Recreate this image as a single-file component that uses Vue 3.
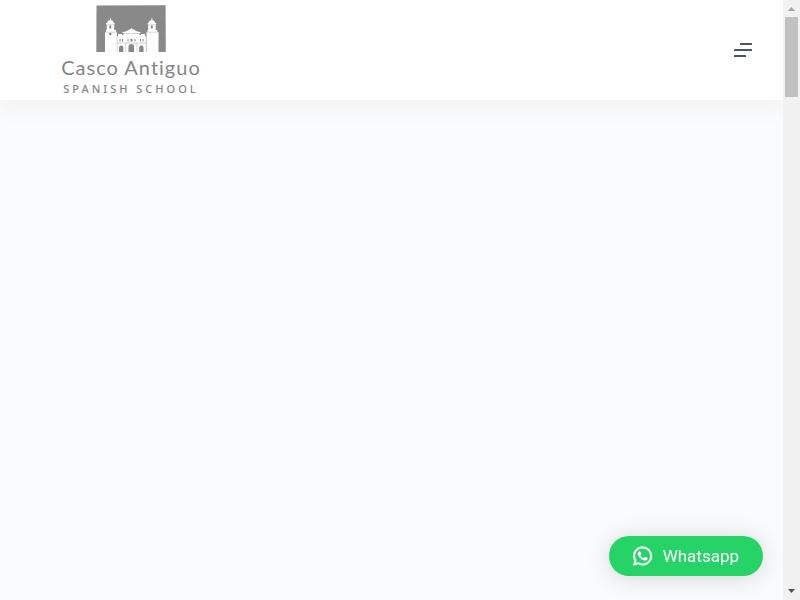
<template>
  <div class="page">
    <div class="content">
      <header class="header">
        <a href="#" class="logo" aria-label="Casco Antiguo Spanish School">
          <svg class="logo-mark" viewBox="0 0 70 47" aria-hidden="true">
            <path fill="#898989" d="M.5.6 69.6.2 69.8 47H.3z" />
            <!-- towers -->
            <g fill="#fff">
              <path d="M14 13h.8v2c1.800.4 2.800 1.600 3 3h.9v1.600h-.5V25H20v2h1v20H9V27h1v-2h.7v-5.400h-.6V18h.9c.3-1.400 1.200-2.600 3-3z" />
              <path d="M55.500 13h.8v2c1.800.4 2.800 1.600 3 3h.9v1.600h-.5V25h1.600v2h1.200v20H50.500V27h1v-2h.7v-5.400h-.6V18h.9c.3-1.400 1.200-2.600 3-3z" />
            </g>
            <!-- facade -->
            <path fill="#fff" d="M21 31h1v-2h4v1h1.500v-2h-1v-1c3-.2 5-1.200 6.500-2.500h1L35.500 23l1.500 1.500h1c1.500 1.300 3.500 2.300 6.500 2.500v1h-1v2H45v-1h4v2h1.500v16H21z" />
            <g fill="none" stroke="#aaa" stroke-width=".5">
              <path d="M9 27.200h12M50.500 27.200h12M10.500 19.800h8M51.800 19.800h8" />
              <path d="M26.500 28.500h18M21 38h29.500M21.200 31v16M29.700 38v9M41 38v9M50.300 31v16" />
            </g>
            <g fill="#898989">
              <path d="M13.300 23.500v-2.300a1 1 0 0 1 2 0v2.300zM54.800 23.500v-2.300a1 1 0 0 1 2 0v2.300z" />
              <circle cx="14.300" cy="29" r="1.300" />
              <path d="M23.500 34h1v2.500h-1zM26 34h1v2.500h-1zM34.500 34h2v2.500h-2zM31.500 34h1v2.500h-1zM38.500 34h1v2.500h-1zM44 34h1v2.500h-1zM46.500 34h1v2.500h-1z" />
              <path d="M23 47v-4.200a2.200 2.200 0 0 1 4.400 0V47zM32.500 47v-5.300a2.800 2.800 0 0 1 5.600 0V47zM43.200 47v-4.200a2.200 2.200 0 0 1 4.400 0V47z" />
            </g>
          </svg>
          <span class="logo-name">Casco Antiguo</span>
          <span class="logo-tagline">SPANISH SCHOOL</span>
        </a>

        <button type="button" class="menu-toggle" aria-label="Menu">
          <svg width="18" height="14" viewBox="0 0 18 14" aria-hidden="true">
            <rect x="6" y="0" width="12" height="2" rx=".5" />
            <rect x="0" y="6" width="18" height="2" rx=".5" />
            <rect x="0" y="12" width="12" height="2" rx=".5" />
          </svg>
        </button>
      </header>
      <main class="main"></main>
    </div>

    <div class="scrollbar" aria-hidden="true">
      <svg class="scroll-arrow" viewBox="0 0 17 17"><path fill="#a3a3a3" d="M5 11h7L8.500 7z" /></svg>
      <div class="scroll-track">
        <div class="scroll-thumb"></div>
      </div>
      <svg class="scroll-arrow" viewBox="0 0 17 17"><path fill="#505050" d="M5 6h7l-3.500 4z" /></svg>
    </div>

    <a href="#" class="whatsapp">
      <svg width="20" height="20" viewBox="-.2 -.5 17 17" aria-hidden="true">
        <path d="M13.601 2.326A7.850 7.850 0 0 0 7.994 0C3.627 0 .068 3.558.064 7.926c0 1.399.366 2.760 1.057 3.965L0 16l4.204-1.102a7.900 7.900 0 0 0 3.790.965h.004c4.368 0 7.926-3.558 7.930-7.930A7.900 7.900 0 0 0 13.600 2.326zM7.994 14.521a6.600 6.600 0 0 1-3.356-.920l-.240-.144-2.494.654.666-2.433-.156-.251a6.560 6.560 0 0 1-1.007-3.505c0-3.626 2.957-6.584 6.591-6.584a6.560 6.560 0 0 1 4.660 1.931 6.560 6.560 0 0 1 1.928 4.660c-.004 3.639-2.961 6.592-6.592 6.592m3.615-4.934c-.197-.099-1.170-.578-1.353-.646-.182-.065-.315-.099-.445.099-.133.197-.513.646-.627.775-.114.133-.232.148-.430.050-.197-.100-.836-.308-1.592-.985-.590-.525-.985-1.175-1.103-1.372-.114-.198-.011-.304.088-.403.087-.088.197-.232.296-.346.100-.114.133-.198.198-.330.065-.134.034-.248-.015-.347-.050-.099-.445-1.076-.612-1.470-.160-.389-.323-.335-.445-.340-.114-.007-.247-.007-.380-.007a.730.730 0 0 0-.529.247c-.182.198-.691.677-.691 1.654s.710 1.916.810 2.049c.098.133 1.394 2.132 3.383 2.992.470.205.840.326 1.129.418.475.152.904.129 1.246.080.380-.058 1.171-.480 1.338-.943.164-.464.164-.860.114-.943-.049-.084-.182-.133-.380-.232" />
      </svg>
      <span>Whatsapp</span>
    </a>
  </div>
</template>

<script setup>
</script>

<style>
body {
  margin: 0;
  background: #fafbfd;
}
</style>

<style scoped>
.page {
  display: flex;
  min-height: 100vh;
  background: #fafbfd;
  font-family: Roboto, sans-serif;
}

.content {
  display: flex;
  flex: 1;
  flex-direction: column;
  min-width: 0;
  overflow: hidden;
}

.header {
  display: flex;
  align-items: center;
  justify-content: space-between;
  box-sizing: border-box;
  min-height: 100px;
  padding: 5px 31px 5px 59px;
  background: #fff;
  box-shadow: 0 10px 20px rgba(41, 51, 61, 0.04);
}

.main {
  flex: 1;
}

.logo {
  display: flex;
  flex-direction: column;
  align-items: center;
  min-width: 144px;
  color: #858585;
  font-family: Lato, sans-serif;
  text-decoration: none;
  white-space: nowrap;
}

.logo-mark {
  width: 70px;
  height: 47px;
}

.logo-name {
  margin-top: 4px;
  font-size: 20px;
  line-height: 22px;
  letter-spacing: 1px;
}

.logo-tagline {
  margin-top: 5px;
  font-family: "Noto Sans", sans-serif;
  font-size: 11px;
  font-weight: 500;
  line-height: 12px;
  letter-spacing: 3px;
}

.menu-toggle {
  display: flex;
  padding: 0;
  border: none;
  background: none;
  cursor: pointer;
}

.menu-toggle svg {
  fill: #4b5663;
}

.scrollbar {
  display: flex;
  flex-direction: column;
  width: 17px;
  background: #f1f1f1;
}

.scroll-arrow {
  width: 17px;
  height: 17px;
}

.scroll-track {
  flex: 1;
}

.scroll-thumb {
  height: 80px;
  margin: 0 2px;
  background: #c1c1c1;
}

.whatsapp {
  position: fixed;
  right: 37px;
  bottom: 24px;
  display: flex;
  align-items: center;
  gap: 10px;
  box-sizing: border-box;
  height: 40px;
  padding: 0 24px;
  border-radius: 20px;
  background: #25d366;
  box-shadow: 0 2px 24px rgba(0, 0, 0, 0.15);
  color: #fff;
  font-size: 17px;
  line-height: 24px;
  text-decoration: none;
}

.whatsapp svg {
  fill: #fff;
  stroke: #fff;
  stroke-width: .4;
}
</style>
